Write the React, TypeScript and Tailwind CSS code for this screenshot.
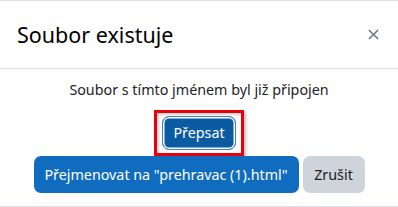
export default function App() {
  return (
    <div className="w-[398px] h-[207px] bg-white font-['Noto_Sans',sans-serif] text-[#1d2125]">
      <div className="border-t border-[#dee2e6]" />
      <div className="flex h-[68px] items-center justify-between border-b border-[#dee2e6] pl-[17px] pr-[19px]">
        <h5 className="text-[21.5px] leading-none text-black">Soubor existuje</h5>
        <button className="flex h-[12px] w-[12px] items-center justify-center text-[#6a737b]">
          <svg viewBox="0 0 12 12" className="h-[11px] w-[11px]" stroke="currentColor" strokeWidth="1.6">
            <path d="M1 1 11 11M11 1 1 11" />
          </svg>
        </button>
      </div>
      <div className="flex h-[137px] flex-col items-center pt-[10px]">
        <p className="text-[14.3px] leading-[22px]">Soubor s tímto jménem byl již připojen</p>
        <div className="mt-[9px] border-[3px] border-[#e8000b] px-[5px] py-[3px] shadow-[2px_2px_3px_rgba(0,0,0,0.25),inset_2px_2px_3px_rgba(0,0,0,0.18)]">
          <button className="flex h-[34px] w-[74px] items-center justify-center rounded-[7px] border border-[#3d83c6] bg-[#0b5ba2] text-[14.3px] text-white shadow-[inset_0_0_0_1.5px_white]">
            Přepsat
          </button>
        </div>
        <div className="flex gap-[4px]">
          <button className="h-[37px] w-[265px] rounded-[7px] bg-[#0f6cbf] text-[14.3px] text-white">
            Přejmenovat na "prehravac (1).html"
          </button>
          <button className="h-[37px] w-[62px] rounded-[7px] bg-[#ced4da] text-[14.3px] text-[#1d2125]">
            Zrušit
          </button>
        </div>
      </div>
      <div className="border-t border-[#dee2e6]" />
    </div>
  );
}
